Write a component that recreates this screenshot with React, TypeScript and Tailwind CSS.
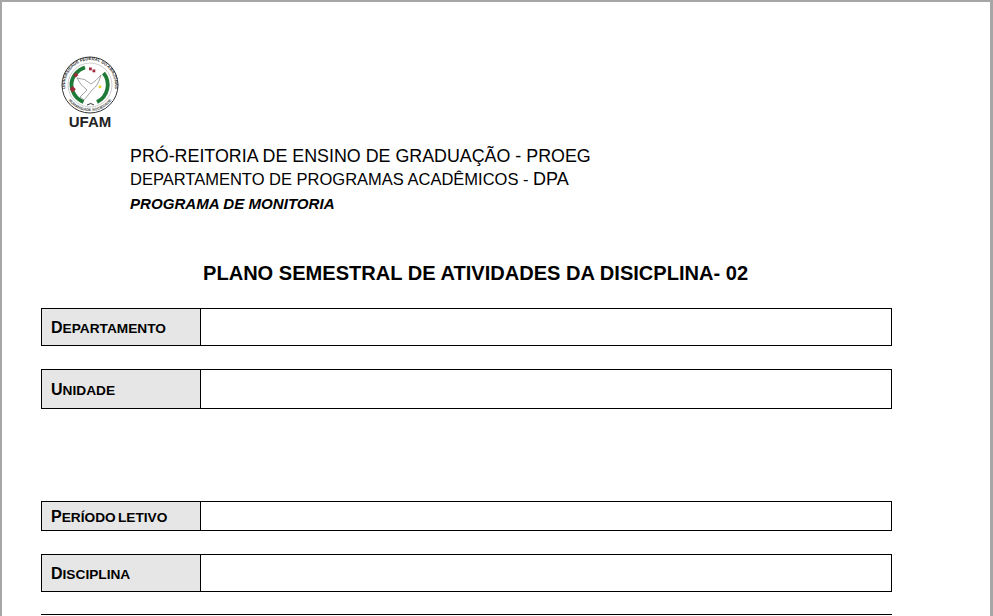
const font = { fontFamily: '"Liberation Sans", Arial, sans-serif' };

type RowProps = {
  first: string;
  rest: string;
  height: string;
  margin: string;
};

const Row = ({ first, rest, height, margin }: RowProps) => {
  return (
    <div className={`flex w-[851px] border border-black ${height} ${margin}`}>
      <div className="flex w-[159px] shrink-0 items-center border-r border-black bg-[#e6e6e6] pt-[2px] pl-[9px]">
        <span className="text-[16px] leading-none font-bold whitespace-nowrap text-black [word-spacing:-1.5px]">
          {first}
          <span className="text-[13.7px]">{rest}</span>
        </span>
      </div>
      <div className="flex-1 bg-white"></div>
    </div>
  );
};

const Logo = () => {
  return (
    <svg width="60" height="60" viewBox="0 0 60 60" className="block">
      <defs>
        <path id="ringTop" d="M8.5 43 A25 25 0 1 1 51.5 43" />
        <path id="ringBottom" d="M4.5 38 A27 27 0 0 0 55.5 38" />
      </defs>
      <circle cx="30" cy="30" r="28" fill="none" stroke="#333" strokeWidth="1" />
      <circle cx="30" cy="30" r="22" fill="none" stroke="#999" strokeWidth="0.5" />
      <text fontSize="4.2" fontWeight="700" fill="#333">
        <textPath href="#ringTop" startOffset="50%" textAnchor="middle">
          UNIVERSIDADE FEDERAL DO AMAZONAS
        </textPath>
      </text>
      <text fontSize="3.8" fontWeight="700" fill="#444">
        <textPath href="#ringBottom" startOffset="50%" textAnchor="middle">
          HUMANIDADE SOCIEDADE
        </textPath>
      </text>
      <path d="M25 12.5 A19 19 0 0 0 11.5 28 A19 19 0 0 0 23.5 47" fill="none" stroke="#1f7a38" strokeWidth="3.8" />
      <path d="M43.5 18 A19 19 0 0 1 37 47" fill="none" stroke="#1f7a38" strokeWidth="3.8" />
      <path d="M27 50 Q31 47 34 50" fill="none" stroke="#333" strokeWidth="1" />
      <rect x="14" y="18.2" width="3.6" height="3.6" fill="#a0283a" transform="rotate(45 15.8 20)" />
      <rect x="10.5" y="32" width="4.4" height="4.4" fill="#a0283a" transform="rotate(45 12.7 34.2)" />
      <rect x="29" y="12.5" width="2.8" height="2.8" fill="#a0283a" />
      <rect x="32.5" y="14.5" width="2.8" height="2.8" fill="#a0283a" />
      <path
        d="M17 23 Q25 23 31 29 Q36 26 41 20 Q38 31 33 34 L24 45 L20 42 L27 35 Q20 30 17 23"
        fill="none"
        stroke="#666"
        strokeWidth="0.6"
      />
      <circle cx="40" cy="31.7" r="1.5" fill="#e8d832" />
    </svg>
  );
};

export default function App() {
  return (
    <div
      className="h-[616px] w-[993px] overflow-hidden border-t-2 border-r-[3px] border-l-2 border-[#a6a6a6] bg-white text-black"
      style={font}
    >
      <div className="pt-[53px] pl-[58px]">
        <div className="flex w-[60px] flex-col items-center">
          <Logo />
          <p className="mt-[-1px] text-[15px] leading-[15px] font-bold text-[#222]">UFAM</p>
        </div>
      </div>

      <div className="pl-[128px]">
        <p className="mt-[16px] text-[17.85px] leading-[22px] whitespace-nowrap">
          PRÓ-REITORIA DE ENSINO DE GRADUAÇÃO - PROEG
        </p>
        <p className="mt-[1px] text-[16.5px] leading-[22px] whitespace-nowrap">
          DEPARTAMENTO DE PROGRAMAS ACADÊMICOS - <span className="text-[18px]">DPA</span>
        </p>
        <p className="mt-[4px] text-[15.1px] leading-[20px] font-bold italic whitespace-nowrap">
          PROGRAMA DE MONITORIA
        </p>
      </div>

      <h1 className="mt-[47px] ml-[201px] text-[20.07px] leading-[24px] font-bold whitespace-nowrap">
        PLANO SEMESTRAL DE ATIVIDADES DA DISICPLINA- 02
      </h1>

      <div className="mt-[23px] ml-[39px]">
        <Row first="D" rest="EPARTAMENTO" height="h-[38px]" margin="" />
        <Row first="U" rest="NIDADE" height="h-[40px]" margin="mt-[23px]" />
        <Row first="P" rest="ERÍODO LETIVO" height="h-[30px]" margin="mt-[92px]" />
        <Row first="D" rest="ISCIPLINA" height="h-[38px]" margin="mt-[23px]" />
        <div className="mt-[22px] h-[1px] w-[851px] bg-black"></div>
      </div>
    </div>
  );
}
